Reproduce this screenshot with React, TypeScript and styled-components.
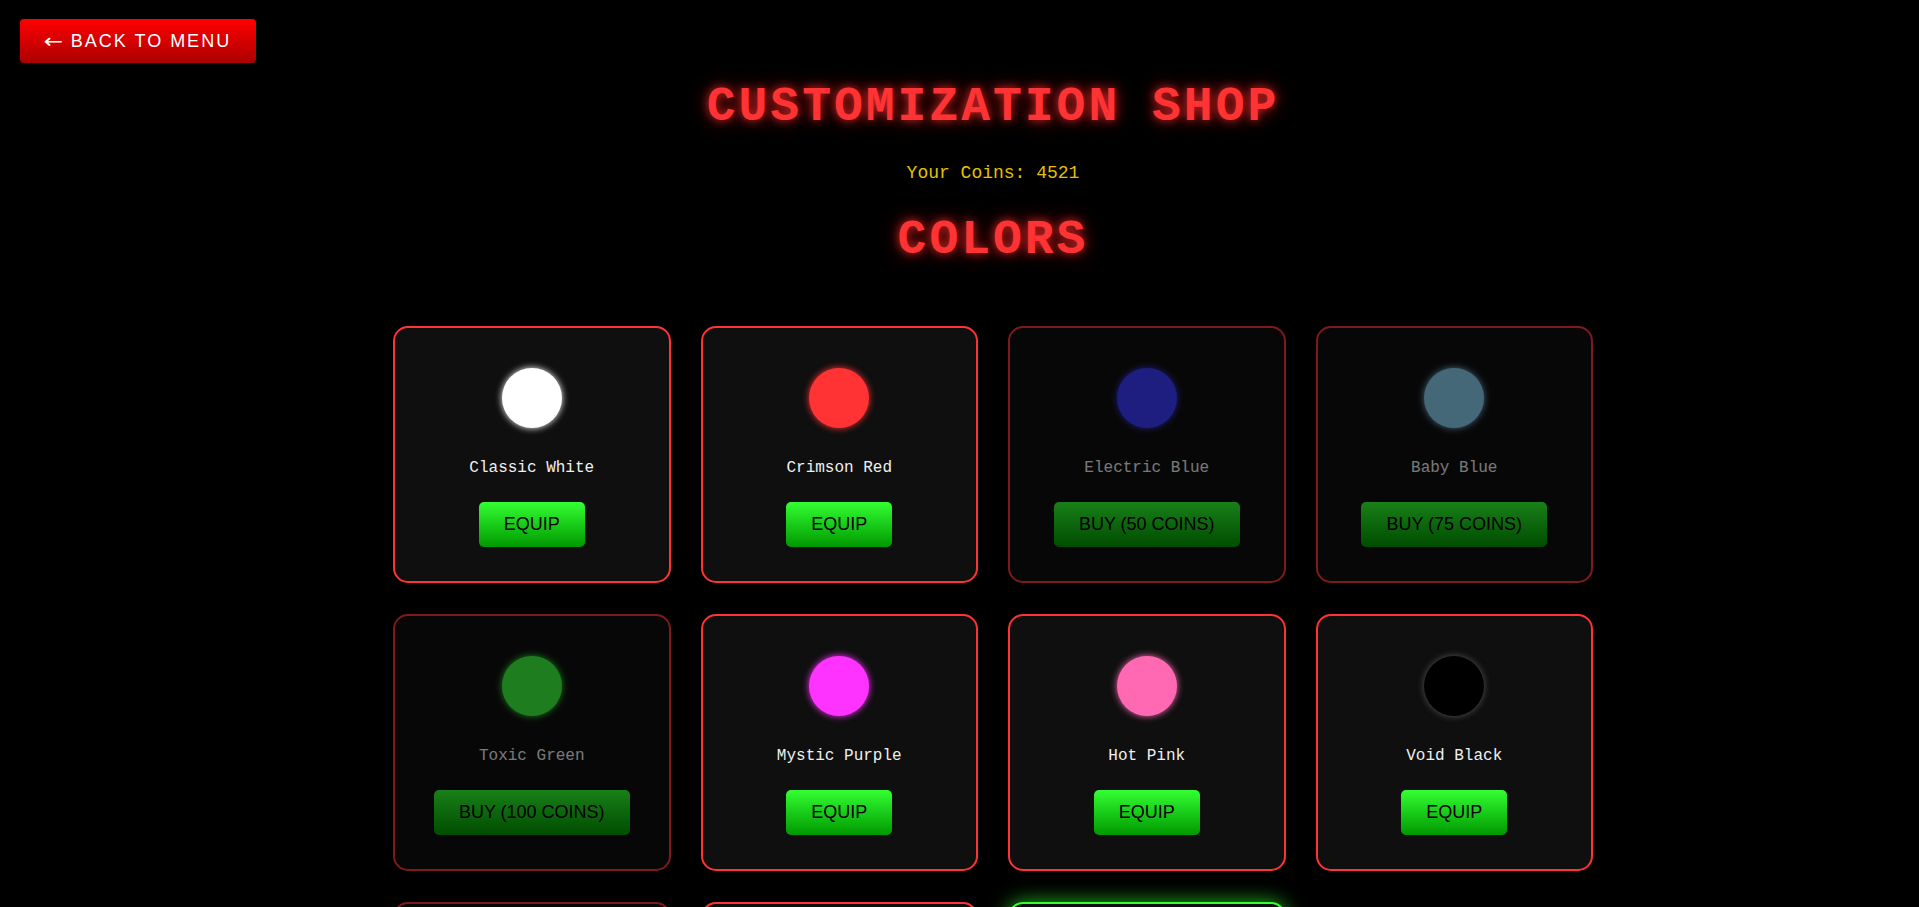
import React from "react";
import styled, { createGlobalStyle } from "styled-components";

const GlobalStyle = createGlobalStyle`
  html, body {
    margin: 0;
    padding: 0;
    background: #000;
  }
  body {
    font-family: "Liberation Mono", "Courier New", monospace;
    color: #fff;
  }
`;

type Item = {
  name: string;
  color: string;
  glow?: string;
  state: "locked" | "owned" | "equipped";
  price?: number;
};

const items: Item[] = [
  { name: "Classic White", color: "#ffffff", state: "owned" },
  { name: "Crimson Red", color: "#ff3333", state: "owned" },
  { name: "Electric Blue", color: "#3c3cff", state: "locked", price: 50 },
  { name: "Baby Blue", color: "#89cff0", state: "locked", price: 75 },
  { name: "Toxic Green", color: "#3cfa3c", state: "locked", price: 100 },
  { name: "Mystic Purple", color: "#ff33ff", state: "owned" },
  { name: "Hot Pink", color: "#ff69b4", state: "owned" },
  { name: "Void Black", color: "#000000", glow: "#555555", state: "owned" },
  { name: "Golden Sun", color: "#ffd700", state: "locked", price: 150 },
  { name: "Neon Orange", color: "#ff8c00", state: "owned" },
  { name: "Cyber Cyan", color: "#00ffff", state: "equipped" },
];

const Page = styled.div`
  min-height: 100vh;
  padding: 80px 0 60px 67px;
  box-sizing: border-box;
`;

const BackButton = styled.button`
  position: fixed;
  top: 19px;
  left: 20px;
  height: 44px;
  padding: 0 25px;
  display: flex;
  align-items: center;
  gap: 9px;
  border: none;
  border-radius: 4px;
  background: linear-gradient(to bottom, #ff0000, #aa0000);
  color: #fff;
  font-family: "Liberation Sans", Arial, sans-serif;
  font-size: 18px;
  letter-spacing: 2px;
  cursor: pointer;
  z-index: 10;
`;

const Arrow = styled.span`
  font-family: "DejaVu Sans", sans-serif;
  font-size: 20px;
  line-height: 1;
  letter-spacing: 0;
  transform: scaleX(1.15);
`;

const Shop = styled.main`
  max-width: 1200px;
  margin: 0 auto;
  display: flex;
  flex-direction: column;
  align-items: center;
`;

const Title = styled.h1`
  margin: 0;
  font-size: 48px;
  line-height: 54px;
  font-weight: bold;
  letter-spacing: 3px;
  color: #ff3333;
  text-shadow: 0 0 10px rgba(255, 51, 51, 0.8), 0 0 20px rgba(255, 0, 0, 0.5);
`;

const Coins = styled.p`
  margin: 29px 0 0;
  font-size: 18px;
  line-height: 20px;
  color: #e5c100;
`;

const Section = styled.h2`
  margin: 30px 0 0;
  font-size: 48px;
  line-height: 54px;
  font-weight: bold;
  letter-spacing: 3px;
  color: #ff3333;
  text-shadow: 0 0 10px rgba(255, 51, 51, 0.8), 0 0 20px rgba(255, 0, 0, 0.5);
`;

const Grid = styled.div`
  margin-top: 59px;
  width: 100%;
  display: grid;
  grid-template-columns: repeat(4, 1fr);
  gap: 31px 30px;
`;

const Card = styled.div<{ $state: Item["state"] }>`
  display: flex;
  flex-direction: column;
  align-items: center;
  padding: 40px 20px 34px;
  border-radius: 15px;
  background: #0f0f0f;
  border: 2px solid ${(p) => (p.$state === "equipped" ? "#33ff33" : "#ff3333")};
  box-shadow: ${(p) =>
    p.$state === "equipped" ? "0 0 20px rgba(51, 255, 51, 0.7)" : "none"};
  opacity: ${(p) => (p.$state === "locked" ? 0.5 : 1)};
`;

const Swatch = styled.div<{ $color: string; $glow: string }>`
  width: 60px;
  height: 60px;
  border-radius: 50%;
  background: ${(p) => p.$color};
  box-shadow: 0 0 7px ${(p) => p.$glow};
`;

const Name = styled.div`
  margin-top: 31px;
  font-size: 16px;
  line-height: 18px;
  color: #f0f0f0;
`;

const Action = styled.button`
  margin-top: 25px;
  height: 45px;
  padding: 0 25px;
  border: none;
  border-radius: 5px;
  background: linear-gradient(to bottom, #33ff33, #009900);
  color: #000;
  font-family: "Liberation Sans", Arial, sans-serif;
  font-size: 18px;
  cursor: pointer;
`;

function ShopCard({ item }: { item: Item }) {
  let label = "EQUIP";
  if (item.state === "locked") label = `BUY (${item.price} COINS)`;
  if (item.state === "equipped") label = "EQUIPPED";
  return (
    <Card $state={item.state}>
      <Swatch $color={item.color} $glow={item.glow ?? item.color} />
      <Name>{item.name}</Name>
      <Action>{label}</Action>
    </Card>
  );
}

export default function App() {
  return (
    <>
      <GlobalStyle />
      <Page>
        <BackButton>
          <Arrow>←</Arrow>
          BACK TO MENU
        </BackButton>
        <Shop>
          <Title>CUSTOMIZATION SHOP</Title>
          <Coins>Your Coins: 4521</Coins>
          <Section>COLORS</Section>
          <Grid>
            {items.map((item) => (
              <ShopCard key={item.name} item={item} />
            ))}
          </Grid>
        </Shop>
      </Page>
    </>
  );
}
